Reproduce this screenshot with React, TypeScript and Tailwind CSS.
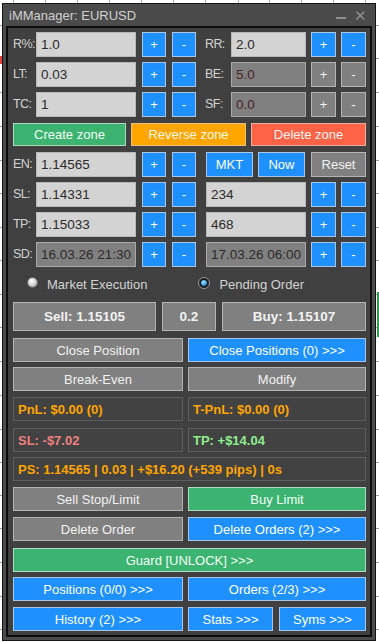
import React from "react";

const BLUE = "bg-[#1e90ff] text-white border border-[#a9c6e6]";
const GRAY = "bg-[#808080] text-[#f2f2f2] border border-[#b4b4b4]";
const GREEN = "bg-[#3cb371] text-[#f2fff6] border border-[#b4d9c2]";

function Btn({ cls, w, ml, children, bold }: { cls: string; w: string; ml?: string; children: React.ReactNode; bold?: boolean }) {
  return (
    <div className={`${cls} ${w} ${ml ?? ""} h-full flex items-center justify-center shrink-0 ${bold ? "font-bold text-[13.5px]" : "text-[13px]"} leading-none`}>
      {children}
    </div>
  );
}

function Input({ w, value, disabled, dim }: { w: string; value: string; disabled?: boolean; dim?: boolean }) {
  return (
    <div
      className={`${w} h-full shrink-0 flex items-center pl-[4px] text-[13.5px] leading-none border ${
        disabled ? "bg-[#808080] border-[#a8a8a8]" : "bg-[#d3d3d3] border-[#b8b8b8]"
      } ${dim ? "text-[#4a2424]" : "text-[#2e2a2a]"}`}
    >
      {value}
    </div>
  );
}

function Label({ w, ml, children }: { w: string; ml?: string; children: React.ReactNode }) {
  return <div className={`${w} ${ml ?? ""} shrink-0 text-[12.5px] tracking-[-0.6px] text-[#d2d2d2] leading-none`}>{children}</div>;
}

function PM({ ml1, w }: { ml1: string; w: string }) {
  return (
    <>
      <Btn cls={BLUE} w={w} ml={ml1}>+</Btn>
      <Btn cls={BLUE} w={w} ml={ml1}>-</Btn>
    </>
  );
}

function Info({ w, ml, color, children }: { w: string; ml?: string; color: string; children: React.ReactNode }) {
  return (
    <div className={`${w} ${ml ?? ""} h-full shrink-0 border border-[#5e5e5e] bg-[#424242] flex items-center pl-[4px] font-bold text-[13px] leading-none ${color}`}>
      {children}
    </div>
  );
}

const TOP_TICKS = [13, 45, 77, 109, 141, 173, 205, 238, 269, 301, 333, 365];
const SIDE_TICKS = [25, 58, 92, 126, 160, 193, 227, 260, 294, 327, 361, 395, 429, 462, 495, 528, 562, 596, 629];

export default function App() {
  return (
    <div className="relative w-[379px] h-[642px] bg-white overflow-hidden pt-[3px] pl-[2px] font-['Liberation_Sans',Arial,sans-serif]">
      {TOP_TICKS.map((x) => (
        <div key={"t" + x} className="absolute top-0 w-px h-[3px] bg-[#b0b0b0]" style={{ left: x }} />
      ))}
      {SIDE_TICKS.map((y) => (
        <div key={"r" + y} className="absolute right-0 w-[3px] h-px bg-[#a0a0a0]" style={{ top: y }} />
      ))}
      {SIDE_TICKS.map((y) => (
        <div key={"l" + y} className="absolute left-0 w-[2px] h-px bg-[#a0a0a0]" style={{ top: y }} />
      ))}
      <div className="absolute right-0 top-[292px] w-[2px] h-[45px] bg-[#2e9e4a]" />
      <div className="absolute left-0 top-[56px] w-[2px] h-[8px] bg-[#e04040]" />

      <div className="relative z-10 w-[374px] h-[638px] bg-[#4b4b4b] border border-[#141414] flex flex-col">
        <div className="h-[22px] shrink-0 flex items-center pl-[6px] pr-[8px]">
          <span className="text-[13px] text-[#cfcfcf] leading-none">iMManager: EURUSD</span>
          <div className="ml-auto flex items-center">
            <div className="w-[10px] h-[2px] bg-[#8e8e8e] mt-[6px]" />
            <span className="ml-[8px] text-[15px] text-[#8e8e8e] leading-none">✕</span>
          </div>
        </div>
        <div className="mx-[3px] mb-[3px] flex-1 border-2 border-[#0c0c0c] bg-[#404040] pl-[5px] pr-[4px] pt-[4px] flex flex-col">
          <div className="h-[25px] flex items-center">
            <Label w="w-[23px]">R%:</Label>
            <Input w="w-[100px]" value="1.0" />
            <PM ml1="ml-[6px]" w="w-[24px]" />
            <Label w="w-[26px]" ml="ml-[9px]">RR:</Label>
            <Input w="w-[75px]" value="2.0" />
            <PM ml1="ml-[5px]" w="w-[25px]" />
          </div>
          <div className="h-[25px] mt-[5px] flex items-center">
            <Label w="w-[23px]">LT:</Label>
            <Input w="w-[100px]" value="0.03" />
            <PM ml1="ml-[6px]" w="w-[24px]" />
            <Label w="w-[26px]" ml="ml-[9px]">BE:</Label>
            <Input w="w-[75px]" value="5.0" disabled dim />
            <Btn cls={GRAY} w="w-[25px]" ml="ml-[5px]">+</Btn>
            <Btn cls={GRAY} w="w-[25px]" ml="ml-[5px]">-</Btn>
          </div>
          <div className="h-[25px] mt-[5px] flex items-center">
            <Label w="w-[23px]">TC:</Label>
            <Input w="w-[100px]" value="1" />
            <PM ml1="ml-[6px]" w="w-[24px]" />
            <Label w="w-[26px]" ml="ml-[9px]">SF:</Label>
            <Input w="w-[75px]" value="0.0" disabled dim />
            <Btn cls={GRAY} w="w-[25px]" ml="ml-[5px]">+</Btn>
            <Btn cls={GRAY} w="w-[25px]" ml="ml-[5px]">-</Btn>
          </div>
          <div className="h-[23px] mt-[6px] flex">
            <Btn cls={GREEN} w="w-[113px]">Create zone</Btn>
            <Btn cls="bg-[#ffa500] text-[#fff8e8] border border-[#e8c080]" w="w-[115px]" ml="ml-[5px]">Reverse zone</Btn>
            <Btn cls="bg-[#ff6347] text-[#fff4f0] border border-[#e8b0a0]" w="w-[115px]" ml="ml-[5px]">Delete zone</Btn>
          </div>
          <div className="h-[25px] mt-[6px] flex items-center">
            <Label w="w-[23px]">EN:</Label>
            <Input w="w-[100px]" value="1.14565" />
            <PM ml1="ml-[6px]" w="w-[24px]" />
            <Btn cls={BLUE} w="w-[47px]" ml="ml-[10px]">MKT</Btn>
            <Btn cls={BLUE} w="w-[47px]" ml="ml-[5px]">Now</Btn>
            <Btn cls={GRAY} w="w-[55px]" ml="ml-[6px]">Reset</Btn>
          </div>
          <div className="h-[25px] mt-[5px] flex items-center">
            <Label w="w-[23px]">SL:</Label>
            <Input w="w-[100px]" value="1.14331" />
            <PM ml1="ml-[6px]" w="w-[24px]" />
            <div className="ml-[10px] h-full flex"><Input w="w-[100px]" value="234" /></div>
            <PM ml1="ml-[5px]" w="w-[25px]" />
          </div>
          <div className="h-[25px] mt-[5px] flex items-center">
            <Label w="w-[23px]">TP:</Label>
            <Input w="w-[100px]" value="1.15033" />
            <PM ml1="ml-[6px]" w="w-[24px]" />
            <div className="ml-[10px] h-full flex"><Input w="w-[100px]" value="468" /></div>
            <PM ml1="ml-[5px]" w="w-[25px]" />
          </div>
          <div className="h-[25px] mt-[5px] flex items-center">
            <Label w="w-[23px]">SD:</Label>
            <Input w="w-[100px]" value="16.03.26 21:30" disabled />
            <PM ml1="ml-[6px]" w="w-[24px]" />
            <div className="ml-[10px] h-full flex"><Input w="w-[100px]" value="17.03.26 06:00" disabled /></div>
            <PM ml1="ml-[5px]" w="w-[25px]" />
          </div>
          <div className="h-[35px] flex items-center">
            <div className="ml-[14px] w-[11px] h-[11px] rounded-full bg-[radial-gradient(circle_at_40%_35%,#ffffff_0%,#d8d8d8_45%,#8a8a8a_100%)] border border-[#6a6a6a] -mt-[4px]" />
            <span className="ml-[9px] text-[13px] text-[#d2d2d2] leading-none">Market Execution</span>
            <div className="ml-[51px] w-[12px] h-[12px] rounded-full bg-[#1c1c1c] border border-[#9a9a9a] flex items-center justify-center -mt-[4px]">
              <div className="w-[6px] h-[6px] rounded-full bg-[radial-gradient(circle_at_40%_35%,#bfe6ff_0%,#2a9ee8_55%,#0a5a90_100%)]" />
            </div>
            <span className="ml-[9px] text-[13px] text-[#d2d2d2] leading-none">Pending Order</span>
          </div>
          <div className="h-[29px] flex">
            <Btn cls={GRAY} w="w-[143px]" bold>Sell: 1.15105</Btn>
            <Btn cls={GRAY} w="w-[54px]" ml="ml-[6px]" bold>0.2</Btn>
            <Btn cls={GRAY} w="w-[144px]" ml="ml-[6px]" bold>Buy: 1.15107</Btn>
          </div>
          <div className="h-[24px] mt-[7px] flex">
            <Btn cls={GRAY} w="w-[170px]">Close Position</Btn>
            <Btn cls={BLUE} w="w-[178px]" ml="ml-[5px]">Close Positions (0) &gt;&gt;&gt;</Btn>
          </div>
          <div className="h-[24px] mt-[5px] flex">
            <Btn cls={GRAY} w="w-[170px]">Break-Even</Btn>
            <Btn cls={GRAY} w="w-[178px]" ml="ml-[5px]">Modify</Btn>
          </div>
          <div className="h-[24px] mt-[6px] flex">
            <Info w="w-[170px]" color="text-[#ffa500]">PnL: $0.00 (0)</Info>
            <Info w="w-[178px]" ml="ml-[5px]" color="text-[#ffa500]">T-PnL: $0.00 (0)</Info>
          </div>
          <div className="h-[24px] mt-[7px] flex">
            <Info w="w-[170px]" color="text-[#f08080]">SL: -$7.02</Info>
            <Info w="w-[178px]" ml="ml-[5px]" color="text-[#90ee90]">TP: +$14.04</Info>
          </div>
          <div className="h-[24px] mt-[5px] flex">
            <Info w="w-[353px]" color="text-[#ffa500]">PS: 1.14565 | 0.03 | +$16.20 (+539 pips) | 0s</Info>
          </div>
          <div className="h-[24px] mt-[6px] flex">
            <Btn cls={GRAY} w="w-[170px]">Sell Stop/Limit</Btn>
            <Btn cls={GREEN} w="w-[178px]" ml="ml-[5px]">Buy Limit</Btn>
          </div>
          <div className="h-[24px] mt-[6px] flex">
            <Btn cls={GRAY} w="w-[170px]">Delete Order</Btn>
            <Btn cls={BLUE} w="w-[178px]" ml="ml-[5px]">Delete Orders (2) &gt;&gt;&gt;</Btn>
          </div>
          <div className="h-[24px] mt-[7px] flex">
            <Btn cls={GREEN} w="w-[353px]">Guard [UNLOCK] &gt;&gt;&gt;</Btn>
          </div>
          <div className="h-[24px] mt-[5px] flex">
            <Btn cls={BLUE} w="w-[170px]">Positions (0/0) &gt;&gt;&gt;</Btn>
            <Btn cls={BLUE} w="w-[178px]" ml="ml-[5px]">Orders (2/3) &gt;&gt;&gt;</Btn>
          </div>
          <div className="h-[24px] mt-[6px] flex">
            <Btn cls={BLUE} w="w-[170px]">History (2) &gt;&gt;&gt;</Btn>
            <Btn cls={BLUE} w="w-[85px]" ml="ml-[5px]">Stats &gt;&gt;&gt;</Btn>
            <Btn cls={BLUE} w="w-[87px]" ml="ml-[6px]">Syms &gt;&gt;&gt;</Btn>
          </div>
        </div>
      </div>
    </div>
  );
}
